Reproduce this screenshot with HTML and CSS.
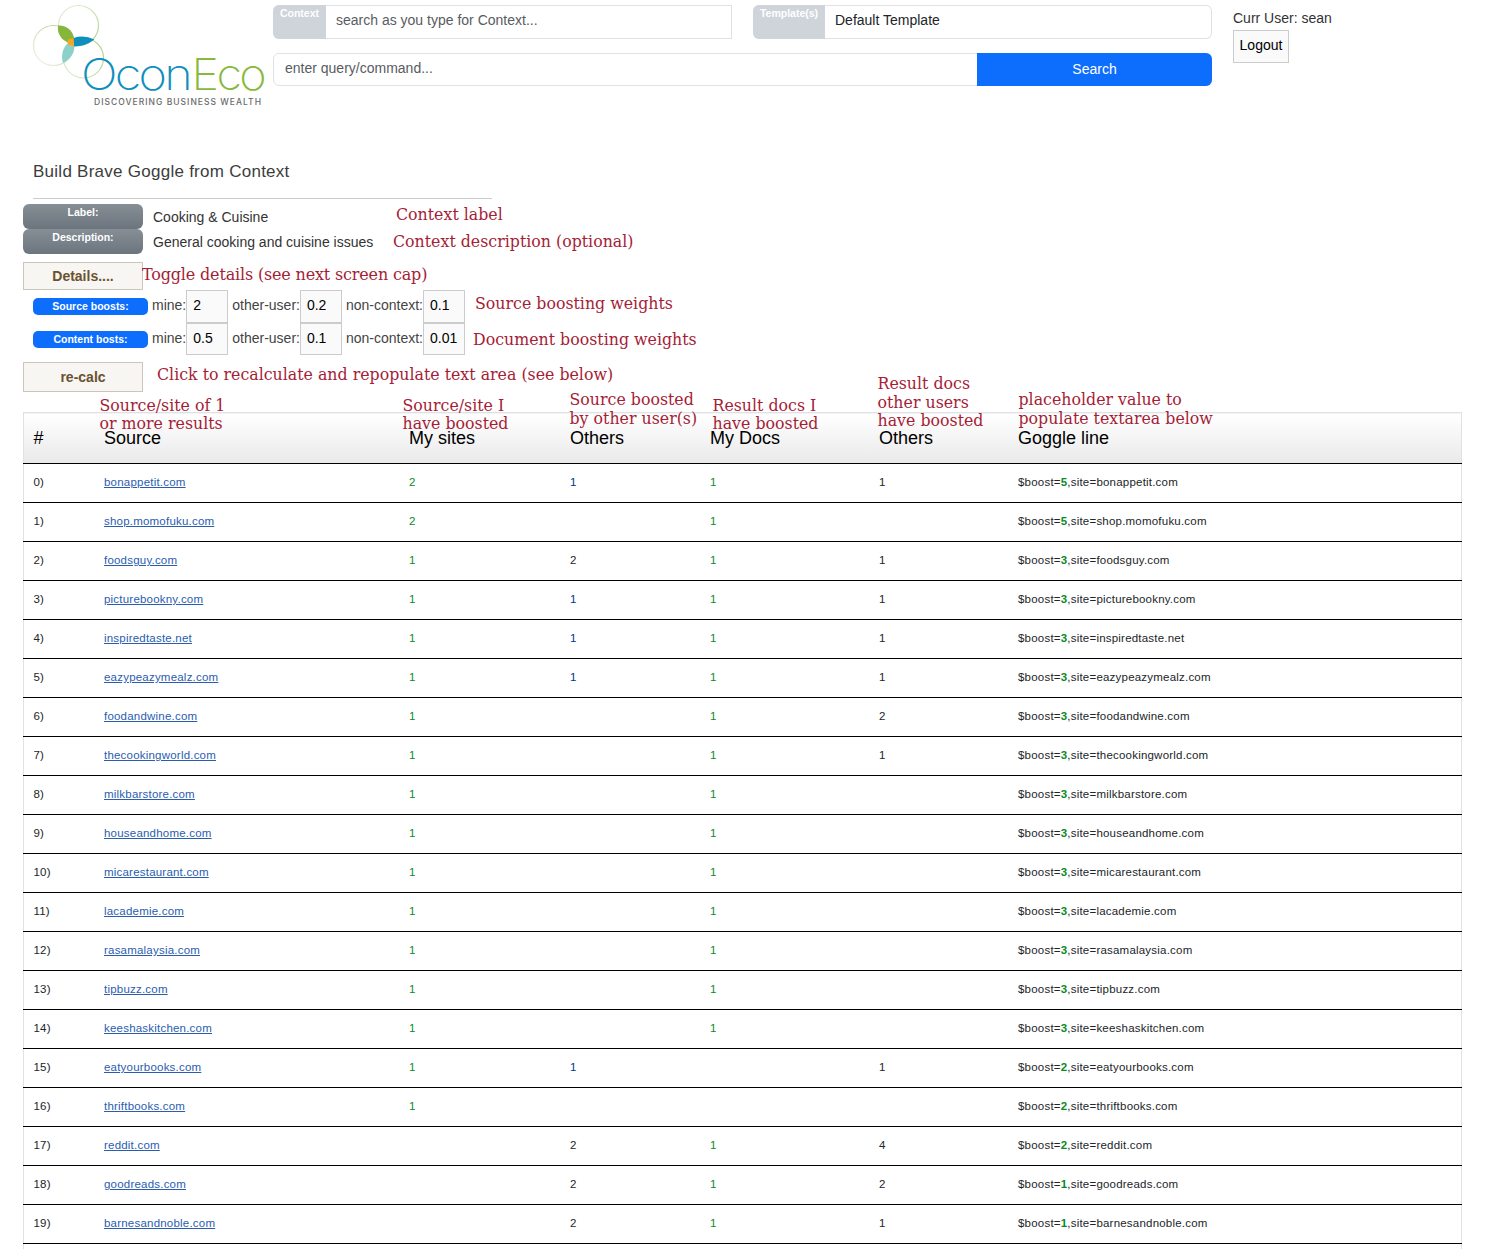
FILE: index.html
```html
<!DOCTYPE html>
<html>
<head>
<meta charset="UTF-8">
<title>Build Brave Goggle from Context</title>
<link rel="stylesheet" href="styles.css">
</head>
<body>
<header class="top">
  <svg class="logo" width="273" height="116" viewBox="0 0 273 116">
    <defs>
      <linearGradient id="ring1" x1="0" y1="0" x2="1" y2="1">
        <stop offset="0" stop-color="#e6eeda"/><stop offset="1" stop-color="#b4d28c"/>
      </linearGradient>
      <linearGradient id="ring2" x1="1" y1="0" x2="0" y2="1">
        <stop offset="0" stop-color="#a9cc7c"/><stop offset="1" stop-color="#f2f6ec"/>
      </linearGradient>
      <linearGradient id="ring3" x1="1" y1="0" x2="0" y2="1">
        <stop offset="0" stop-color="#a9cc7c"/><stop offset="1" stop-color="#e6efd8"/>
      </linearGradient>
    </defs>
    <circle cx="78.5" cy="25.5" r="20" fill="none" stroke="url(#ring1)" stroke-width="1.2"/>
    <circle cx="53.5" cy="45.5" r="20" fill="none" stroke="url(#ring2)" stroke-width="1.2"/>
    <circle cx="83.5" cy="58" r="20" fill="none" stroke="url(#ring3)" stroke-width="1.2"/>
    <path d="M58 25.5A15 15 0 0 1 74 43A15 15 0 0 1 58 25.5Z" fill="#86b63c"/>
    <path d="M73.5 38Q84 34.5 94.5 39.5Q84 47 74 46.5Z" fill="#0f8fbe"/>
    <path d="M67 44L74.5 46.5C74 55 69 60 63 63C61 57 62 49 67 44Z" fill="#8dd0ca"/>
    <path d="M68 39.5L73.5 38L74 46.5L67.5 44.5Z" fill="#f5a623"/>
    <text class="logo-ocon" x="81" y="90" textLength="109" lengthAdjust="spacingAndGlyphs">Ocon</text>
    <text class="logo-eco" x="191.5" y="90" textLength="72.5" lengthAdjust="spacingAndGlyphs">Eco</text>
    <text class="logo-tag" x="94" y="105" textLength="167">DISCOVERING BUSINESS WEALTH</text>
  </svg>
  <div class="search">
    <div class="pickers">
      <div class="picker picker-context">
        <span class="picker-tag">Context</span>
        <span class="picker-text">search as you type for Context...</span>
      </div>
      <div class="picker picker-template">
        <span class="picker-tag">Template(s)</span>
        <span class="picker-text picker-dark">Default Template</span>
      </div>
    </div>
    <div class="query">
      <span class="query-text">enter query/command...</span>
      <button class="query-btn">Search</button>
    </div>
  </div>
  <div class="user">
    <div class="user-name">Curr User: sean</div>
    <button class="logout">Logout</button>
  </div>
</header>

<h1 class="title">Build Brave Goggle from Context</h1>
<div class="rule"></div>

<section class="form">
  <div class="meta">
    <div class="meta-row">
      <span class="meta-tag">Label:</span>
      <span class="meta-value">Cooking &amp; Cuisine</span>
      <span class="note note-label">Context label</span>
    </div>
    <div class="meta-row">
      <span class="meta-tag">Description:</span>
      <span class="meta-value">General cooking and cuisine issues</span>
      <span class="note note-desc">Context description (optional)</span>
    </div>
  </div>
  <div class="action action-details">
    <button class="soft-btn soft-details">Details....</button>
    <span class="note note-toggle">Toggle details (see next screen cap)</span>
  </div>
  <div class="boost">
    <span class="pill">Source boosts:</span>
    <span class="field-label">mine:</span><span class="field field-first">2</span>
    <span class="field-label">other-user:</span><span class="field">0.2</span>
    <span class="field-label">non-context:</span><span class="field">0.1</span>
    <span class="note note-source">Source boosting weights</span>
  </div>
  <div class="boost boost-second">
    <span class="pill">Content bosts:</span>
    <span class="field-label">mine:</span><span class="field field-first">0.5</span>
    <span class="field-label">other-user:</span><span class="field">0.1</span>
    <span class="field-label">non-context:</span><span class="field">0.01</span>
    <span class="note note-doc">Document boosting weights</span>
  </div>
  <div class="action action-recalc">
    <button class="soft-btn soft-recalc">re-calc</button>
    <span class="note note-recalc">Click to recalculate and repopulate text area (see below)</span>
  </div>
</section>

<table class="sites">
  <colgroup>
    <col class="col-num"><col class="col-source"><col class="col-mine"><col class="col-others"><col class="col-docs"><col class="col-docothers"><col>
  </colgroup>
  <thead>
    <tr>
      <th>#</th>
      <th>Source<span class="th-note note-src">Source/site of 1<br>or more results</span></th>
      <th>My sites<span class="th-note note-mine">Source/site I<br>have boosted</span></th>
      <th>Others<span class="th-note note-oth">Source boosted<br>by other user(s)</span></th>
      <th>My Docs<span class="th-note note-docs">Result docs I<br>have boosted</span></th>
      <th>Others<span class="th-note note-docoth">Result docs<br>other users<br>have boosted</span></th>
      <th>Goggle line<span class="th-note note-gog">placeholder value to<br>populate textarea below</span></th>
    </tr>
  </thead>
  <tbody>
    <tr><td>0)</td><td><a href="#">bonappetit.com</a></td><td class="mine">2</td><td class="other">1</td><td class="mine">1</td><td>1</td><td>$boost=<b>5</b>,site=bonappetit.com</td></tr>
    <tr><td>1)</td><td><a href="#">shop.momofuku.com</a></td><td class="mine">2</td><td></td><td class="mine">1</td><td></td><td>$boost=<b>5</b>,site=shop.momofuku.com</td></tr>
    <tr><td>2)</td><td><a href="#">foodsguy.com</a></td><td class="mine">1</td><td>2</td><td class="mine">1</td><td>1</td><td>$boost=<b>3</b>,site=foodsguy.com</td></tr>
    <tr><td>3)</td><td><a href="#">picturebookny.com</a></td><td class="mine">1</td><td class="other">1</td><td class="mine">1</td><td>1</td><td>$boost=<b>3</b>,site=picturebookny.com</td></tr>
    <tr><td>4)</td><td><a href="#">inspiredtaste.net</a></td><td class="mine">1</td><td class="other">1</td><td class="mine">1</td><td>1</td><td>$boost=<b>3</b>,site=inspiredtaste.net</td></tr>
    <tr><td>5)</td><td><a href="#">eazypeazymealz.com</a></td><td class="mine">1</td><td class="other">1</td><td class="mine">1</td><td>1</td><td>$boost=<b>3</b>,site=eazypeazymealz.com</td></tr>
    <tr><td>6)</td><td><a href="#">foodandwine.com</a></td><td class="mine">1</td><td></td><td class="mine">1</td><td>2</td><td>$boost=<b>3</b>,site=foodandwine.com</td></tr>
    <tr><td>7)</td><td><a href="#">thecookingworld.com</a></td><td class="mine">1</td><td></td><td class="mine">1</td><td>1</td><td>$boost=<b>3</b>,site=thecookingworld.com</td></tr>
    <tr><td>8)</td><td><a href="#">milkbarstore.com</a></td><td class="mine">1</td><td></td><td class="mine">1</td><td></td><td>$boost=<b>3</b>,site=milkbarstore.com</td></tr>
    <tr><td>9)</td><td><a href="#">houseandhome.com</a></td><td class="mine">1</td><td></td><td class="mine">1</td><td></td><td>$boost=<b>3</b>,site=houseandhome.com</td></tr>
    <tr><td>10)</td><td><a href="#">micarestaurant.com</a></td><td class="mine">1</td><td></td><td class="mine">1</td><td></td><td>$boost=<b>3</b>,site=micarestaurant.com</td></tr>
    <tr><td>11)</td><td><a href="#">lacademie.com</a></td><td class="mine">1</td><td></td><td class="mine">1</td><td></td><td>$boost=<b>3</b>,site=lacademie.com</td></tr>
    <tr><td>12)</td><td><a href="#">rasamalaysia.com</a></td><td class="mine">1</td><td></td><td class="mine">1</td><td></td><td>$boost=<b>3</b>,site=rasamalaysia.com</td></tr>
    <tr><td>13)</td><td><a href="#">tipbuzz.com</a></td><td class="mine">1</td><td></td><td class="mine">1</td><td></td><td>$boost=<b>3</b>,site=tipbuzz.com</td></tr>
    <tr><td>14)</td><td><a href="#">keeshaskitchen.com</a></td><td class="mine">1</td><td></td><td class="mine">1</td><td></td><td>$boost=<b>3</b>,site=keeshaskitchen.com</td></tr>
    <tr><td>15)</td><td><a href="#">eatyourbooks.com</a></td><td class="mine">1</td><td class="other">1</td><td></td><td>1</td><td>$boost=<b>2</b>,site=eatyourbooks.com</td></tr>
    <tr><td>16)</td><td><a href="#">thriftbooks.com</a></td><td class="mine">1</td><td></td><td></td><td></td><td>$boost=<b>2</b>,site=thriftbooks.com</td></tr>
    <tr><td>17)</td><td><a href="#">reddit.com</a></td><td></td><td>2</td><td class="mine">1</td><td>4</td><td>$boost=<b>2</b>,site=reddit.com</td></tr>
    <tr><td>18)</td><td><a href="#">goodreads.com</a></td><td></td><td>2</td><td class="mine">1</td><td>2</td><td>$boost=<b>1</b>,site=goodreads.com</td></tr>
    <tr><td>19)</td><td><a href="#">barnesandnoble.com</a></td><td></td><td>2</td><td class="mine">1</td><td>1</td><td>$boost=<b>1</b>,site=barnesandnoble.com</td></tr>
    <tr><td>&nbsp;</td><td></td><td></td><td></td><td></td><td></td><td></td></tr>
  </tbody>
</table>
</body>
</html>
```
FILE: styles.css
```css
html,body{overflow:hidden;height:100%;}
body{margin:0;background:#fff;color:#212529;font:14px/1.2 "Liberation Sans",Arial,sans-serif;}
button{font-family:inherit;padding:0;cursor:pointer;}

/* top bar */
.top{display:flex;align-items:flex-start;height:130px;}
.logo{flex:none;display:block;}
.logo-ocon,.logo-eco{font:250 44px Inter,"Open Sans",sans-serif;letter-spacing:-2.5px;}
.logo-ocon{fill:#0f8fbe;}
.logo-eco{fill:#86b93c;}
.logo-tag{font:500 8.5px Inter,"Open Sans",sans-serif;fill:#6b6b6b;}
.search{width:939px;padding-top:5px;}
.pickers{display:flex;justify-content:space-between;}
.picker{display:flex;height:34px;box-sizing:border-box;border:1px solid #dee2e6;border-left:0;border-radius:6px 0 0 6px;}
.picker-context{width:459px;}
.picker-template{width:459px;border-radius:6px;}
.picker-tag{background:#ced4da;color:#fff;font-weight:bold;font-size:10.5px;line-height:16px;text-align:center;border-radius:6px 0 0 6px;margin:-1px 0;}
.picker-context .picker-tag{width:53px;}
.picker-template .picker-tag{width:72px;}
.picker-text{padding-left:10px;line-height:29px;color:#595c5f;}
.picker-dark{color:#212529;}
.query{display:flex;height:33px;margin-top:14px;box-sizing:border-box;border:1px solid #dee2e6;border-radius:6px;}
.query-text{flex:1;padding-left:11px;line-height:29px;color:#595c5f;}
.query-btn{width:235px;margin:-1px;padding-bottom:2px;border:0;border-radius:0 6px 6px 0;background:#0d6efd;color:#fff;font-size:14px;}
.user{margin-left:21px;padding-top:10px;}
.user-name{line-height:16px;color:#333;}
.logout{display:block;width:56px;height:33px;margin-top:4px;padding-bottom:3px;background:#fafafa;border:1px solid #ccc;color:#000;font-size:14px;}

/* heading */
.title{margin:0 0 0 33px;padding-top:31px;font-size:17px;letter-spacing:.26px;font-weight:normal;line-height:21px;color:#3d3d3d;}
.rule{width:459px;height:1px;margin:16px 0 0 33px;background:#ccc;}

/* form */
.form{margin:5px 0 0 23px;}
.note{font:15.8px/20px "DejaVu Serif",serif;color:#a51d36;white-space:nowrap;}
.meta-row{display:flex;align-items:flex-start;height:25px;}
.meta-tag{width:120px;height:25px;background:linear-gradient(#868e96,#6c757d);color:#fff;font-weight:bold;font-size:10.5px;line-height:16px;text-align:center;border-radius:6px;}
.meta-value{width:243px;padding:5px 0 0 10px;line-height:16px;color:#333;}
.note-label{margin-top:1px;}
.note-desc{margin:3px 0 0 -3px;}
.action{display:flex;align-items:center;}
.action-details{margin-top:8px;}
.action-recalc{margin-top:7px;}
.soft-btn{width:120px;box-sizing:border-box;background:#f8f6f3;border:1px solid #ccc5b9;color:#6a5230;font-weight:bold;font-size:14px;}
.soft-details{height:28px;}
.soft-recalc{height:30px;margin-right:14px;}
.note-toggle{margin:0 0 2px -1px;font-size:16px;letter-spacing:-.17px;}
.note-recalc{margin-bottom:4px;}
.boost{display:flex;align-items:center;height:33px;margin-left:10px;}
.boost-second{height:32px;}
.boost-second .field{height:32px;}
.pill{width:115px;height:17px;margin-right:4px;background:#0d6efd;color:#fff;font-weight:bold;font-size:10.5px;line-height:17px;text-align:center;border-radius:5px;}
.field-label{padding-bottom:2px;color:#444;}
.field{width:42px;height:33px;box-sizing:border-box;margin-right:4px;padding-left:6px;border:1px solid #ccc;background:#fafafa;color:#000;line-height:29px;}
.note-source{margin:0 0 6px 6px;}
.note-doc{margin:2px 0 0 4px;}

/* table */
.sites{position:relative;width:1439px;margin:20px 0 0 23px;table-layout:fixed;border-collapse:collapse;border:1px solid #dee2e6;border-bottom:0;}
.col-num{width:71px;}
.col-source{width:305px;}
.col-mine{width:161px;}
.col-others{width:140px;}
.col-docs{width:169px;}
.col-docothers{width:139px;}
.sites th{position:relative;height:51px;padding:1px 9.5px 0;box-sizing:border-box;border-bottom:1px solid #000;background:linear-gradient(#fff,#e9e9e9);color:#000;font-size:18px;font-weight:normal;text-align:left;}
.sites td{height:38px;padding:0 9.5px;border-bottom:1px solid #000;font-size:11.5px;letter-spacing:.21px;color:#212529;}
.sites a{color:#2a5db0;}
.sites b{color:#0a8a1f;}
.sites .mine{color:#0a8a1f;}
.sites .other{color:#00358a;}
.th-note{position:absolute;font:15.8px/18.5px "DejaVu Serif",serif;color:#a51d36;white-space:nowrap;}
.note-src{top:-16px;left:5px;line-height:18px;}
.note-mine{top:-16px;left:3px;line-height:18px;}
.note-oth{top:-22px;left:9px;}
.note-docs{top:-16px;left:12px;line-height:18px;}
.note-docoth{top:-38px;left:8px;}
.note-gog{top:-22px;left:10px;}
```
